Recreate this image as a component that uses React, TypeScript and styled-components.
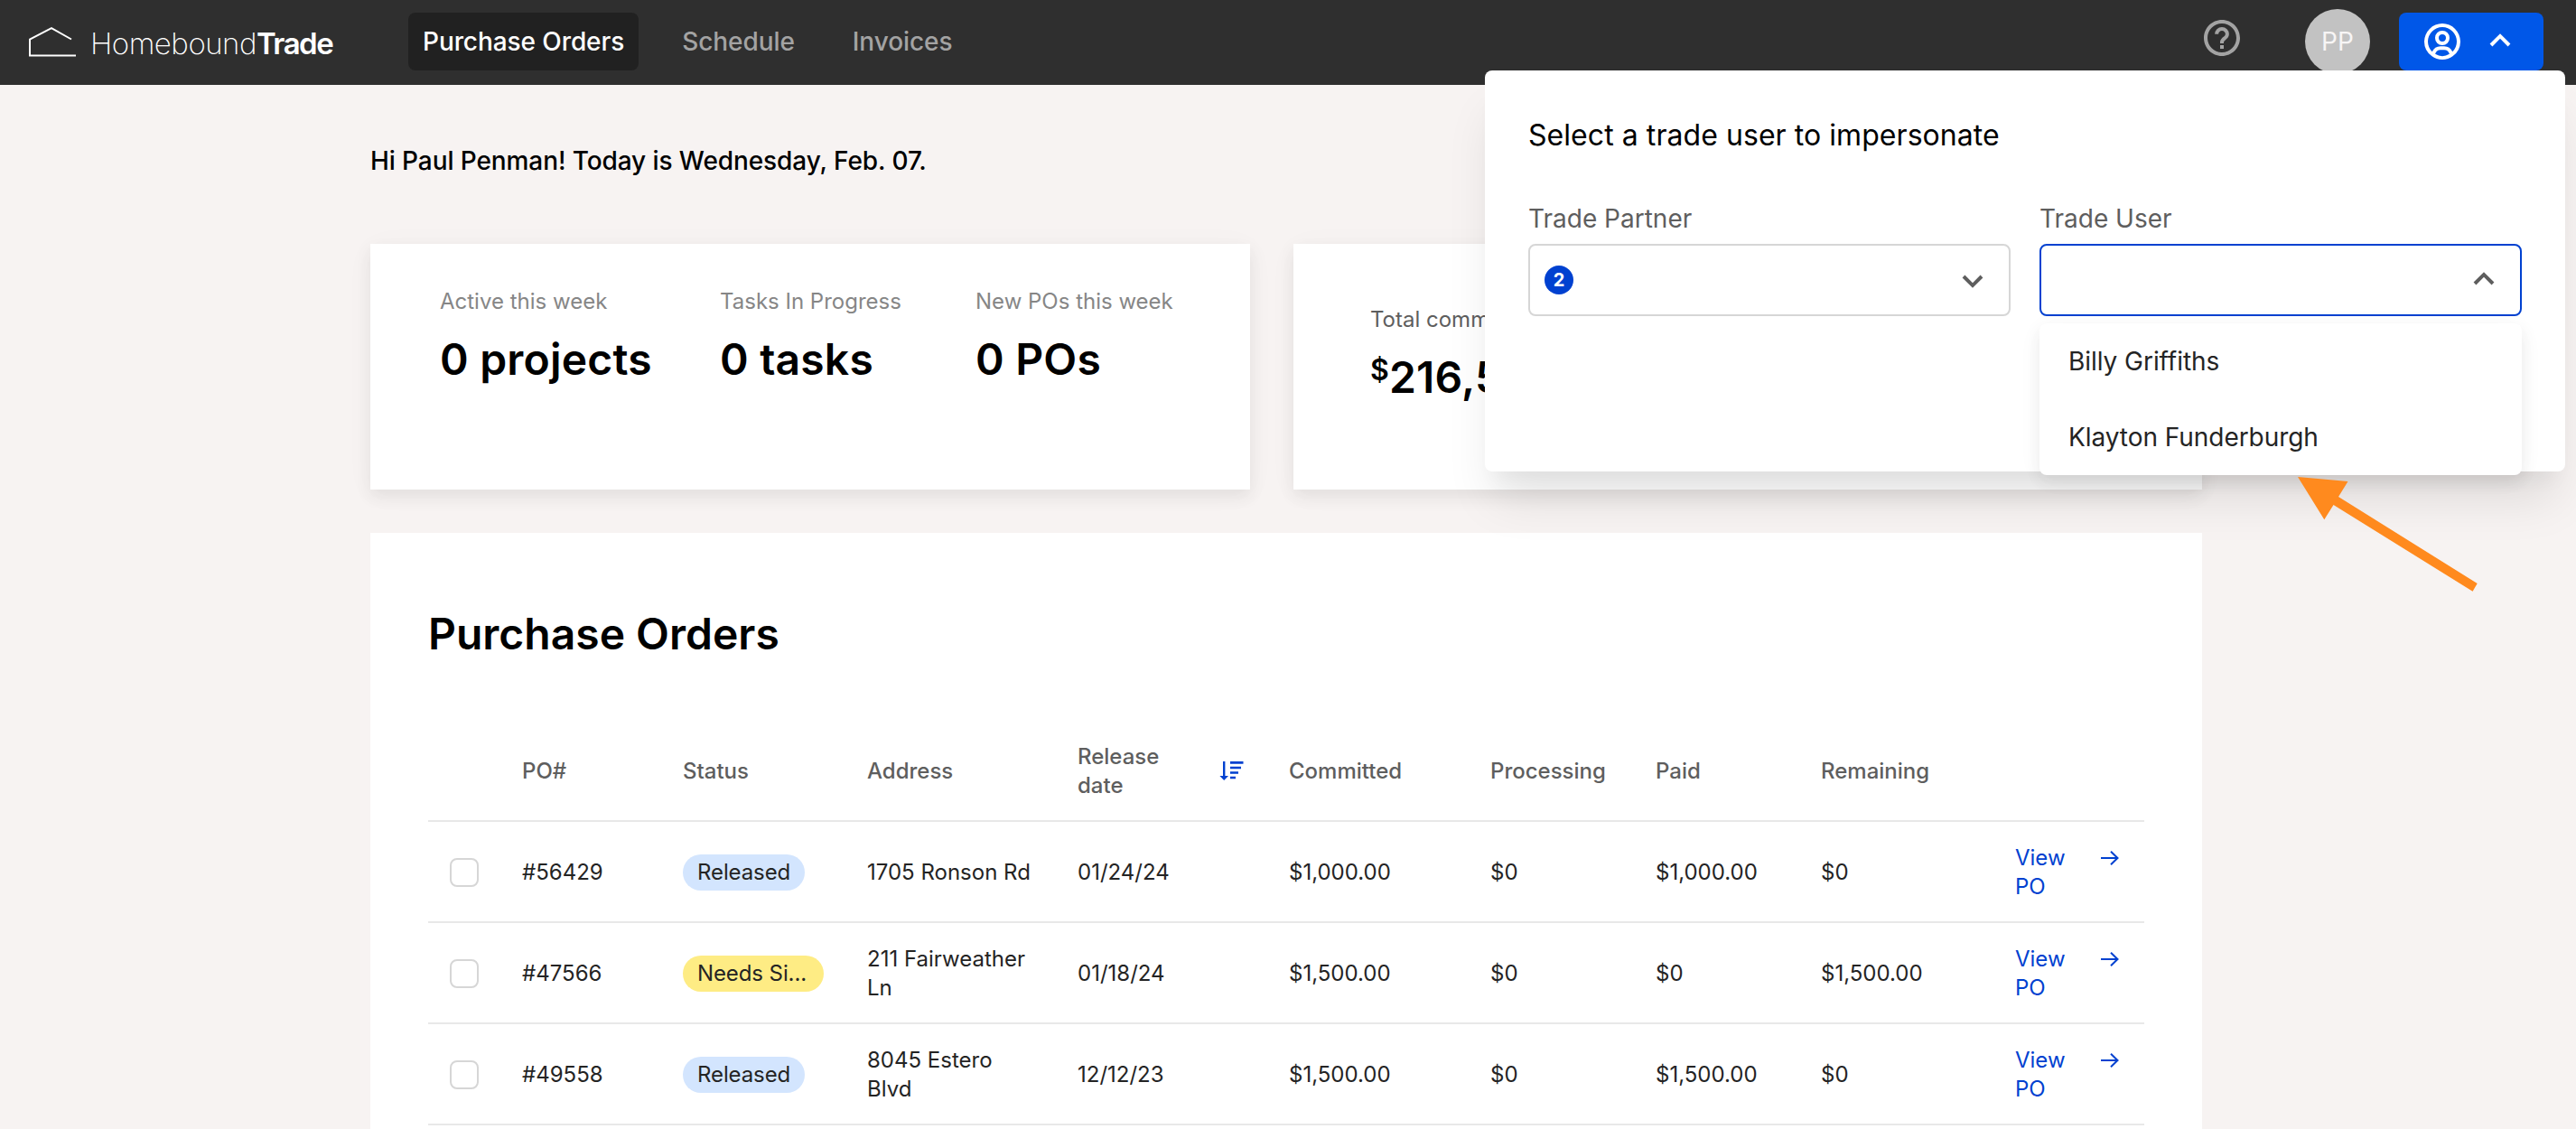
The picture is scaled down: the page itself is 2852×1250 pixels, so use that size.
import React from 'react';
import styled, { createGlobalStyle } from 'styled-components';
import { BiChevronDown, BiChevronUp, BiHelpCircle, BiUserCircle } from 'react-icons/bi';

interface PurchaseOrder {
  id: string;
  status: string;
  color: string;
  tagWidth: number;
  address: string;
  releaseDate: string;
  committed: string;
  processing: string;
  paid: string;
  remaining: string;
}

const orders: PurchaseOrder[] = [
  {
    id: '#56429',
    status: 'Released',
    color: '#d3e5fe',
    tagWidth: 135,
    address: '1705 Ronson Rd',
    releaseDate: '01/24/24',
    committed: '$1,000.00',
    processing: '$0',
    paid: '$1,000.00',
    remaining: '$0',
  },
  {
    id: '#47566',
    status: 'Needs Si...',
    color: '#feec84',
    tagWidth: 156,
    address: '211 Fairweather Ln',
    releaseDate: '01/18/24',
    committed: '$1,500.00',
    processing: '$0',
    paid: '$0',
    remaining: '$1,500.00',
  },
  {
    id: '#49558',
    status: 'Released',
    color: '#d3e5fe',
    tagWidth: 135,
    address: '8045 Estero Blvd',
    releaseDate: '12/12/23',
    committed: '$1,500.00',
    processing: '$0',
    paid: '$1,500.00',
    remaining: '$0',
  },
];

const GlobalStyle = createGlobalStyle`
  * {
    box-sizing: border-box;
  }

  body {
    margin: 0;
    background: #f7f3f2;
    color: #000;
    font-family: Inter, 'Liberation Sans', sans-serif;
    -webkit-font-smoothing: antialiased;
  }
`;

const Page = styled.div`
  position: relative;
  width: 2852px;
  height: 1250px;
  overflow: hidden;
`;

const Header = styled.header`
  display: flex;
  align-items: center;
  height: 94px;
  padding: 0 36px 2px 32px;
  background: #2f2f2f;
`;

const Logo = styled.div`
  display: flex;
  align-items: center;
  width: 420px;
  gap: 14px;
  color: #fff;
  font-size: 33px;
  font-weight: 200;
  letter-spacing: -0.5px;
  line-height: 40px;

  div {
    padding-top: 3px;
  }

  b {
    font-weight: 600;
    letter-spacing: -1.5px;
  }
`;

const Nav = styled.nav`
  display: flex;
  flex: 1;
  gap: 32px;
`;

const NavItem = styled.a<{ $active?: boolean }>`
  height: 64px;
  padding: 0 16px;
  border-radius: 8px;
  background: ${({ $active }) => ($active ? '#212121' : 'transparent')};
  color: ${({ $active }) => ($active ? '#fff' : '#a3a3a3')};
  font-size: 28px;
  font-weight: 500;
  letter-spacing: -0.08px;
  line-height: 64px;
`;

const Help = styled.div`
  display: flex;
  height: 56px;
  margin-right: 68px;
  color: #a3a3a3;
`;

const Avatar = styled.div`
  width: 72px;
  height: 72px;
  margin-right: 32px;
  border-radius: 50%;
  background: #c2c2c2;
  color: #f7f5f5;
  font-size: 28px;
  line-height: 72px;
  text-align: center;
`;

const UserButton = styled.button`
  display: flex;
  align-items: center;
  gap: 16px;
  width: 160px;
  height: 64px;
  padding: 0 24px;
  border: 0;
  border-radius: 8px;
  background: #0057e8;
  color: #fff;
`;

const Main = styled.main`
  width: 2028px;
  margin-left: 410px;
`;

const Greeting = styled.div`
  padding-top: 64px;
  height: 176px;
  font-size: 28px;
  font-weight: 500;
  letter-spacing: -0.09px;
  line-height: 40px;
`;

const Cards = styled.div`
  display: grid;
  grid-template-columns: 974px 1006px;
  gap: 48px;
  margin-bottom: 48px;
`;

const Card = styled.section<{ $padding: string }>`
  display: flex;
  height: 272px;
  padding: ${({ $padding }) => $padding};
  background: #fff;
  box-shadow: 0 8px 16px rgba(53, 53, 53, 0.08), 0 4px 32px rgba(53, 53, 53, 0.03);
`;

const Stat = styled.div<{ $width?: number; $dark?: boolean }>`
  width: ${({ $width }) => ($width ? `${$width}px` : 'auto')};
  white-space: nowrap;

  .label {
    color: ${({ $dark }) => ($dark ? '#5e5e5e' : '#868686')};
    font-size: 24px;
    line-height: 32px;
  }

  .value {
    display: flex;
    margin-top: 16px;
    font-size: 48px;
    font-weight: 600;
    letter-spacing: 0.2px;
    line-height: 64px;
  }

  .currency {
    font-size: 32px;
    line-height: 48px;
  }
`;

const Orders = styled.section`
  height: 700px;
  padding: 80px 64px 0;
  background: #fff;

  h1 {
    height: 128px;
    margin: 0;
    font-size: 48px;
    font-weight: 600;
    line-height: 64px;
  }
`;

const Row = styled.div<{ $head?: boolean }>`
  display: grid;
  grid-template-columns: 104px 178px 204px 233px 234px 223px 183px 183px 215px 1fr;
  align-items: center;
  height: 112px;
  padding-top: 2px;
  border-bottom: 2px solid #e8e8e8;
  color: ${({ $head }) => ($head ? '#5e5e5e' : '#242424')};
  font-size: 24px;
  font-weight: ${({ $head }) => ($head ? 500 : 400)};
  line-height: 32px;
`;

const Checkbox = styled.div`
  width: 32px;
  height: 32px;
  margin-left: 24px;
  border: 2px solid #d6d6d6;
  border-radius: 8px;
`;

const Tag = styled.div<{ $color: string; $width: number }>`
  width: ${({ $width }) => $width}px;
  height: 40px;
  padding-left: 16px;
  border-radius: 20px;
  background: ${({ $color }) => $color};
  letter-spacing: -0.1px;
  line-height: 40px;
  white-space: nowrap;
`;

const Address = styled.div`
  width: 188px;
`;

const ReleaseDate = styled.div`
  display: flex;
  align-items: center;
  justify-content: space-between;
  padding-right: 49px;

  span {
    width: 100px;
  }
`;

const ViewLink = styled.a`
  display: flex;
  justify-content: space-between;
  padding-right: 27px;
  color: #0041d0;

  span {
    width: 60px;
  }
`;

const Popover = styled.div`
  position: absolute;
  top: 78px;
  left: 1644px;
  width: 1196px;
  height: 444px;
  padding: 48px;
  border-radius: 8px;
  background: #fff;
  box-shadow: 0 40px 50px -10px rgba(0, 0, 0, 0.1), 0 20px 20px -10px rgba(0, 0, 0, 0.04);

  h2 {
    height: 92px;
    margin: 0;
    font-size: 32px;
    font-weight: 400;
    letter-spacing: 0.06px;
    line-height: 48px;
  }
`;

const Fields = styled.div`
  display: grid;
  grid-template-columns: 1fr 1fr;
  gap: 32px;
`;

const Field = styled.div`
  position: relative;

  label {
    display: block;
    height: 52px;
    color: #5e5e5e;
    font-size: 28px;
    line-height: 48px;
  }
`;

const Select = styled.div<{ $open?: boolean }>`
  display: flex;
  align-items: center;
  justify-content: space-between;
  height: 80px;
  padding: 0 16px;
  border: 2px solid ${({ $open }) => ($open ? '#0041d0' : '#d6d6d6')};
  border-radius: 8px;
  color: #5e5e5e;

  svg {
    margin-left: auto;
  }
`;

const Count = styled.span`
  width: 32px;
  height: 32px;
  border-radius: 50%;
  background: #0041d0;
  color: #fff;
  font-size: 20px;
  font-weight: 700;
  line-height: 32px;
  text-align: center;
`;

const Menu = styled.ul`
  position: absolute;
  top: 140px;
  left: 0;
  width: 100%;
  margin: 0;
  padding: 0;
  border-radius: 8px;
  background: #fff;
  box-shadow: 0 8px 16px rgba(53, 53, 53, 0.08), 0 4px 32px rgba(53, 53, 53, 0.03);
  list-style: none;
`;

const Option = styled.li`
  height: 84px;
  padding: 0 32px;
  color: #242424;
  font-size: 28px;
  letter-spacing: -0.05px;
  line-height: 84px;
`;

const Pointer = styled.svg`
  position: absolute;
  top: 520px;
  left: 2540px;
`;

const SortIcon = () => (
  <svg width="28" height="24" viewBox="0 0 28 24" fill="#0041d0">
    <path d="M4 1h2.4v16H10l-4.8 5L.4 17H4z" />
    <path d="M12 1h14.5v2.7H12zM12 6.8h12v2.5H12zM12 12.2h9v2.6h-9zM12 17.7h6v2.5h-6z" />
  </svg>
);

const ArrowIcon = () => (
  <svg width="22" height="32" viewBox="0 0 22 32" fill="none" stroke="#0041d0" strokeWidth="2">
    <path d="M1 16h19M12 8.700l7.500 7.300-7.500 7.300" />
  </svg>
);

const App = () => {
  return (
    <Page>
      <GlobalStyle />
      <Header>
        <Logo>
          <svg width="54" height="36" viewBox="0 0 54 36" fill="none" stroke="#fff" strokeWidth="2">
            <path d="M47 15.500L25 3.200 1 15.500V33.500h51" />
          </svg>
          <div>
            Homebound<b>Trade</b>
          </div>
        </Logo>
        <Nav>
          <NavItem $active>Purchase Orders</NavItem>
          <NavItem>Schedule</NavItem>
          <NavItem>Invoices</NavItem>
        </Nav>
        <Help>
          <BiHelpCircle size={48} />
        </Help>
        <Avatar>PP</Avatar>
        <UserButton>
          <BiUserCircle size={48} />
          <BiChevronUp size={48} />
        </UserButton>
      </Header>

      <Main>
        <Greeting>Hi Paul Penman! Today is Wednesday, Feb. 07.</Greeting>
        <Cards>
          <Card $padding="48px 77px">
            <Stat $width={310}>
              <div className="label">Active this week</div>
              <div className="value">0 projects</div>
            </Stat>
            <Stat $width={283}>
              <div className="label">Tasks In Progress</div>
              <div className="value">0 tasks</div>
            </Stat>
            <Stat>
              <div className="label">New POs this week</div>
              <div className="value">0 POs</div>
            </Stat>
          </Card>
          <Card $padding="68px 85px">
            <Stat $dark>
              <div className="label">Total committed</div>
              <div className="value">
                <span className="currency">$</span>216,500
              </div>
            </Stat>
          </Card>
        </Cards>

        <Orders>
          <h1>Purchase Orders</h1>
          <Row $head>
            <div />
            <div>PO#</div>
            <div>Status</div>
            <div>Address</div>
            <ReleaseDate>
              <span>Release date</span>
              <SortIcon />
            </ReleaseDate>
            <div>Committed</div>
            <div>Processing</div>
            <div>Paid</div>
            <div>Remaining</div>
            <div />
          </Row>
          {orders.map((order) => (
            <Row key={order.id}>
              <Checkbox />
              <div>{order.id}</div>
              <Tag $color={order.color} $width={order.tagWidth}>
                {order.status}
              </Tag>
              <Address>{order.address}</Address>
              <div>{order.releaseDate}</div>
              <div>{order.committed}</div>
              <div>{order.processing}</div>
              <div>{order.paid}</div>
              <div>{order.remaining}</div>
              <ViewLink>
                <span>View PO</span>
                <ArrowIcon />
              </ViewLink>
            </Row>
          ))}
        </Orders>
      </Main>

      <Popover>
        <h2>Select a trade user to impersonate</h2>
        <Fields>
          <Field>
            <label>Trade Partner</label>
            <Select>
              <Count>2</Count>
              <BiChevronDown size={48} />
            </Select>
          </Field>
          <Field>
            <label>Trade User</label>
            <Select $open>
              <BiChevronUp size={48} />
            </Select>
            <Menu>
              <Option>Billy Griffiths</Option>
              <Option>Klayton Funderburgh</Option>
            </Menu>
          </Field>
        </Fields>
      </Popover>

      <Pointer width="210" height="140" viewBox="2540 520 210 140" fill="#ff8a1e">
        <path d="M2544 528L2599.500 533L2589 550L2742.700 646L2737.600 654.700L2583.500 559L2573.300 575.300Z" />
      </Pointer>
    </Page>
  );
};

export default App;
